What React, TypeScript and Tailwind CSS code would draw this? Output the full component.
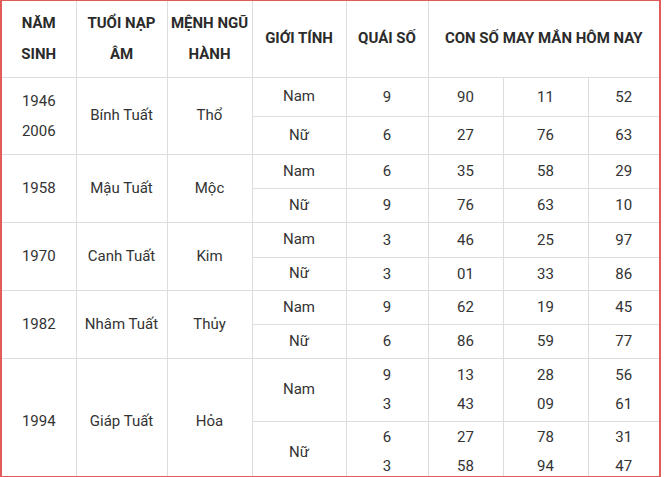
import React from "react";

type Sub = { gender: string; qs: string[]; nums: string[][] };
type Group = { years: string[]; tuoi: string; menh: string; rows: Sub[]; heights: string[]; lead: string };

const groups: Group[] = [
  {
    years: ["1946", "2006"],
    tuoi: "Bính Tuất",
    menh: "Thổ",
    heights: ["h-[39px]", "h-[38px]"],
    lead: "leading-[30px]",
    rows: [
      { gender: "Nam", qs: ["9"], nums: [["90", "11", "52"]] },
      { gender: "Nữ", qs: ["6"], nums: [["27", "76", "63"]] },
    ],
  },
  {
    years: ["1958"],
    tuoi: "Mậu Tuất",
    menh: "Mộc",
    heights: ["h-[34px]", "h-[34px]"],
    lead: "leading-[30px]",
    rows: [
      { gender: "Nam", qs: ["6"], nums: [["35", "58", "29"]] },
      { gender: "Nữ", qs: ["9"], nums: [["76", "63", "10"]] },
    ],
  },
  {
    years: ["1970"],
    tuoi: "Canh Tuất",
    menh: "Kim",
    heights: ["h-[35px]", "h-[33px]"],
    lead: "leading-[30px]",
    rows: [
      { gender: "Nam", qs: ["3"], nums: [["46", "25", "97"]] },
      { gender: "Nữ", qs: ["3"], nums: [["01", "33", "86"]] },
    ],
  },
  {
    years: ["1982"],
    tuoi: "Nhâm Tuất",
    menh: "Thủy",
    heights: ["h-[34px]", "h-[34px]"],
    lead: "leading-[30px]",
    rows: [
      { gender: "Nam", qs: ["9"], nums: [["62", "19", "45"]] },
      { gender: "Nữ", qs: ["6"], nums: [["86", "59", "77"]] },
    ],
  },
  {
    years: ["1994"],
    tuoi: "Giáp Tuất",
    menh: "Hỏa",
    heights: ["h-[63px]", "h-[62px]"],
    lead: "leading-[29px]",
    rows: [
      { gender: "Nam", qs: ["9", "3"], nums: [["13", "28", "56"], ["43", "09", "61"]] },
      { gender: "Nữ", qs: ["6", "3"], nums: [["27", "78", "31"], ["58", "94", "47"]] },
    ],
  },
];

const cell = "border border-[#dddddd] text-center align-middle p-0";

const Lines = ({ items, lead }: { items: string[]; lead: string }) => (
  <>
    {items.map((t, i) => (
      <div key={i} className={lead}>
        {t}
      </div>
    ))}
  </>
);

export default function App() {
  return (
    <div className="w-[664px] h-[477px] bg-white">
      <div
        className="w-[661px] h-[477px] overflow-hidden border-x-2 border-y border-[#e25b5b] text-[15px] text-[#333333]"
        style={{ fontFamily: "Roboto, 'Liberation Sans', sans-serif" }}
      >
        <table className="w-full table-fixed border-collapse border-hidden">
          <colgroup>
            <col className="w-[74px]" />
            <col className="w-[91px]" />
            <col className="w-[85px]" />
            <col className="w-[94px]" />
            <col className="w-[82px]" />
            <col className="w-[75px]" />
            <col className="w-[85px]" />
            <col />
          </colgroup>
          <thead>
            <tr className="h-[76px] font-bold text-[#2b2b2b] leading-[31px]">
              <th className={cell}>
                NĂM
                <br />
                SINH
              </th>
              <th className={cell}>
                TUỔI NẠP
                <br />
                ÂM
              </th>
              <th className={cell}>
                MỆNH NGŨ
                <br />
                HÀNH
              </th>
              <th className={cell}>GIỚI TÍNH</th>
              <th className={cell}>QUÁI SỐ</th>
              <th className={cell} colSpan={3}>
                CON SỐ MAY MẮN HÔM NAY
              </th>
            </tr>
          </thead>
          <tbody>
            {groups.map((g) =>
              g.rows.map((r, ri) => (
                <tr key={g.years[0] + ri} className={g.heights[ri]}>
                  {ri === 0 && (
                    <>
                      <td className={cell} rowSpan={2}>
                        <Lines items={g.years} lead="leading-[30px]" />
                      </td>
                      <td className={cell} rowSpan={2}>
                        {g.tuoi}
                      </td>
                      <td className={cell} rowSpan={2}>
                        {g.menh}
                      </td>
                    </>
                  )}
                  <td className={cell}>{r.gender}</td>
                  <td className={cell}>
                    <Lines items={r.qs} lead={g.lead} />
                  </td>
                  {[0, 1, 2].map((c) => (
                    <td key={c} className={cell}>
                      <Lines items={r.nums.map((n) => n[c])} lead={g.lead} />
                    </td>
                  ))}
                </tr>
              ))
            )}
          </tbody>
        </table>
      </div>
    </div>
  );
}
